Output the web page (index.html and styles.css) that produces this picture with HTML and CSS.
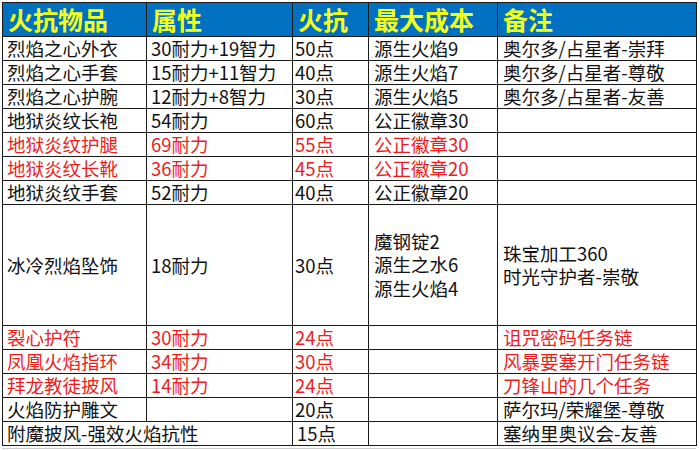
FILE: index.html
```html
<!DOCTYPE html>
<html>
<head>
<meta charset="utf-8">
<link rel="stylesheet" href="styles.css">
</head>
<body>
<div class="sheet">
<table class="grid">
<colgroup>
<col class="c1"><col class="c2"><col class="c3"><col class="c4"><col class="c5">
</colgroup>
<thead>
<tr class="head"><th>火抗物品</th><th>属性</th><th>火抗</th><th>最大成本</th><th>备注</th></tr>
</thead>
<tbody>
<tr><td>烈焰之心外衣</td><td>30耐力+19智力</td><td>50点</td><td>源生火焰9</td><td>奥尔多/占星者-崇拜</td></tr>
<tr><td>烈焰之心手套</td><td>15耐力+11智力</td><td>40点</td><td>源生火焰7</td><td>奥尔多/占星者-尊敬</td></tr>
<tr><td>烈焰之心护腕</td><td>12耐力+8智力</td><td>30点</td><td>源生火焰5</td><td>奥尔多/占星者-友善</td></tr>
<tr><td>地狱炎纹长袍</td><td>54耐力</td><td>60点</td><td>公正徽章30</td><td></td></tr>
<tr class="red"><td>地狱炎纹护腿</td><td>69耐力</td><td>55点</td><td>公正徽章30</td><td></td></tr>
<tr class="red"><td>地狱炎纹长靴</td><td>36耐力</td><td>45点</td><td>公正徽章20</td><td></td></tr>
<tr><td>地狱炎纹手套</td><td>52耐力</td><td>40点</td><td>公正徽章20</td><td></td></tr>
<tr class="tall"><td>冰冷烈焰坠饰</td><td>18耐力</td><td>30点</td><td><div class="ln">魔钢锭2</div><div class="ln">源生之水6</div><div class="ln">源生火焰4</div></td><td><div class="ln">珠宝加工360</div><div class="ln">时光守护者-崇敬</div></td></tr>
<tr class="red"><td>裂心护符</td><td>30耐力</td><td>24点</td><td></td><td>诅咒密码任务链</td></tr>
<tr class="red"><td>凤凰火焰指环</td><td>34耐力</td><td>30点</td><td></td><td>风暴要塞开门任务链</td></tr>
<tr class="red"><td>拜龙教徒披风</td><td>14耐力</td><td>24点</td><td></td><td>刀锋山的几个任务</td></tr>
<tr><td>火焰防护雕文</td><td></td><td>20点</td><td></td><td>萨尔玛/荣耀堡-尊敬</td></tr>
<tr><td colspan="2">附魔披风-强效火焰抗性</td><td>15点</td><td></td><td>塞纳里奥议会-友善</td></tr>
</tbody>
</table>
<div class="tail"></div>
</div>
</body>
</html>
```

FILE: styles.css
```css
html, body {
  margin: 0;
  padding: 0;
  background: #ffffff;
}
.sheet {
  padding: 2px 0 0 2px;
  width: 698px;
  height: 448px;
  overflow: hidden;
}
.grid {
  border-collapse: collapse;
  table-layout: fixed;
  width: 694px;
  font-family: "Noto Sans CJK SC", "Noto Sans", sans-serif;
  font-size: 18.5px;
  color: #111111;
}
.c1 { width: 144px; }
.c2 { width: 146px; }
.c3 { width: 76px; }
.c4 { width: 129px; }
.c5 { width: 199px; }
.grid th, .grid td {
  border: 1px solid #1a1a1a;
  padding: 0 0 0 4px;
  text-align: left;
  vertical-align: middle;
  white-space: nowrap;
  line-height: 23px;
  height: 23px;
  overflow: visible;
}
.head th {
  background: #0070c0;
  color: #f2ff1a;
  font-size: 25px;
  font-weight: bold;
  height: 33px;
  line-height: 33px;
  padding-left: 5px;
}
.grid td:nth-child(3) { padding-left: 2px; }
.grid td:nth-child(4), .grid td:nth-child(5) { padding-left: 5px; }
.red td { color: #ee1c1c; }
.tall td {
  height: 120px;
}
.ln {
  height: 23.5px;
  line-height: 23.5px;
}
.tail {
  height: 2px;
  border-bottom: 1px solid #d0d0d0;
  width: 694px;
}
```
